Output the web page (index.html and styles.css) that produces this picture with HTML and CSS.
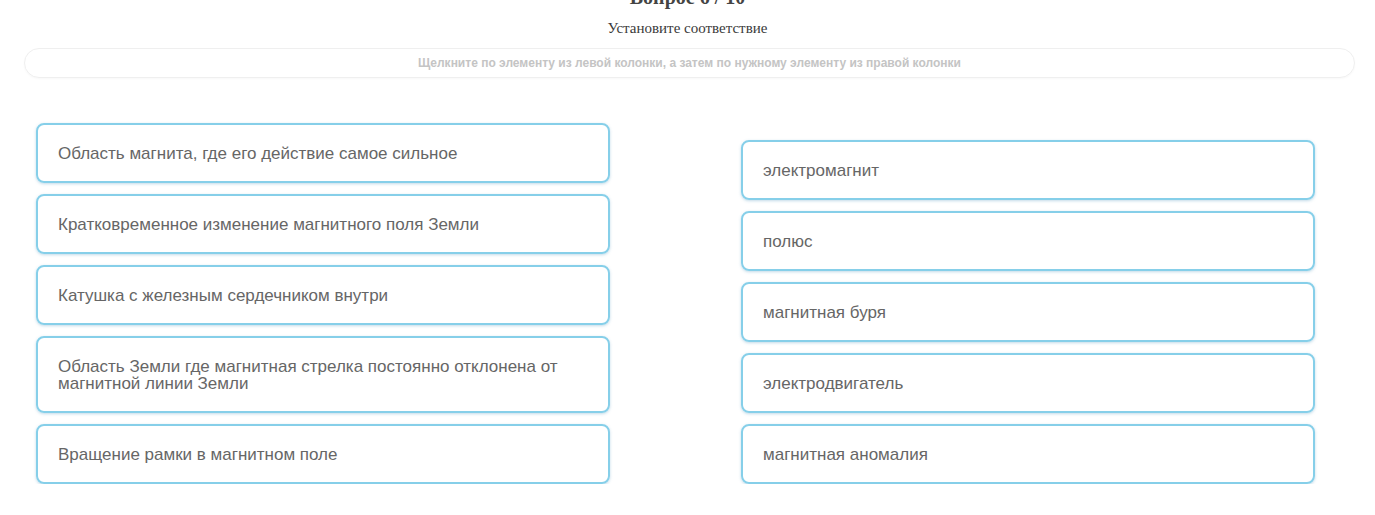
FILE: index.html
```html
<!DOCTYPE html>
<html>
<head>
	<title>Установите соответствие</title>
	<link rel="stylesheet" href="styles.css">
</head>
<body>
	<h2 class="question-num">Вопрос 6 / 10</h2>
	<p class="task">Установите соответствие</p>
	<div class="hint">Щелкните по элементу из левой колонки, а затем по нужному элементу из правой колонки</div>

	<div class="match">
		<div class="column">
			<div class="card">Область магнита, где его действие самое сильное</div>
			<div class="card">Кратковременное изменение магнитного поля Земли</div>
			<div class="card">Катушка с железным сердечником внутри</div>
			<div class="card tall">Область Земли где магнитная стрелка постоянно отклонена от магнитной линии Земли</div>
			<div class="card">Вращение рамки в магнитном поле</div>
		</div>
		<div class="column">
			<div class="card">электромагнит</div>
			<div class="card">полюс</div>
			<div class="card">магнитная буря</div>
			<div class="card">электродвигатель</div>
			<div class="card">магнитная аномалия</div>
		</div>
	</div>
</body>
</html>
```

FILE: styles.css
```css
body {
	margin: 0;
	background: #fff;
	font-family: "Liberation Sans", Arial, sans-serif;
}
.question-num {
	margin: -13px 0 0;
	text-align: center;
	font-family: "Liberation Serif", "Times New Roman", serif;
	font-size: 20px;
	color: #444;
	line-height: 20px;
}
.task {
	margin: 13px 0 0;
	text-align: center;
	font-family: "Liberation Serif", "Times New Roman", serif;
	font-size: 15px;
	color: #3a3a3a;
	line-height: 17px;
}
.hint {
	margin: 11px 20px 0 24px;
	height: 28px;
	line-height: 28px;
	border: 1px solid #efefef;
	border-radius: 15px;
	text-align: center;
	font-size: 12px;
	font-weight: bold;
	color: #c4c4c4;
	box-shadow: 0 1px 2px rgba(0, 0, 0, 0.03);
}
.match {
	display: grid;
	grid-template-columns: 574px 574px;
	column-gap: 131px;
	align-items: end;
	padding: 45px 0 0 36px;
}
.column {
	display: flex;
	flex-direction: column;
	gap: 11px;
}
.card {
	box-sizing: border-box;
	min-height: 60px;
	display: flex;
	align-items: center;
	padding: 0 50px 0 20px;
	border: 2px solid #86cfe9;
	border-radius: 8px;
	box-shadow: 0 1px 3px rgba(80, 150, 190, 0.35);
	font-size: 17px;
	line-height: 17px;
	color: #666;
}
.card.tall {
	min-height: 77px;
}
```
